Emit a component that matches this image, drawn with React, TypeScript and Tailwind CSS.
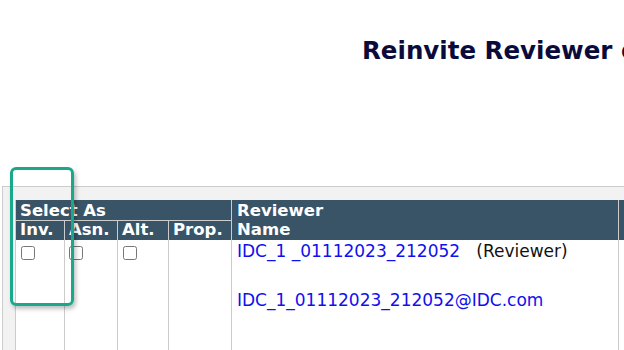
import React from "react";

export default function App() {
  const font = { fontFamily: '"DejaVu Sans", Verdana, sans-serif' };
  return (
    <div className="relative w-[624px] h-[350px] overflow-hidden bg-white" style={font}>
      <div className="h-[186px] pl-[362px] pt-[36px]">
        <h1 className="whitespace-nowrap text-[24.5px] font-bold leading-[30px] text-[#0b0b3b]">
          Reinvite Reviewer of
        </h1>
      </div>
      <div className="ml-[2px] w-[700px] border-l border-t border-[#cccccc] bg-[#f2f2f2] pl-[12px] pt-[13px] h-[200px]">
        <table className="border-collapse bg-white text-[16.5px]">
          <thead>
            <tr className="bg-[#3a5467] text-white font-bold leading-[19px]">
              <th colSpan={4} className="border-l border-[#cccccc] px-[4px] pt-[1px] text-left align-top h-[19px]">
                Select As
              </th>
              <th rowSpan={2} className="w-[387px] border-l border-[#cccccc] px-[5px] pt-[1px] text-left align-top">
                Reviewer
                <br />
                Name
              </th>
              <th rowSpan={2} className="w-[80px] border-l border-[#cccccc]"></th>
            </tr>
            <tr className="bg-[#3a5467] text-white font-bold leading-[18px]">
              <th className="w-[49px] border-l border-t border-[#cccccc] px-[4px] text-left font-bold h-[19px]">Inv.</th>
              <th className="w-[53px] border-l border-t border-[#cccccc] px-[4px] text-left font-bold">Asn.</th>
              <th className="w-[51px] border-l border-t border-[#cccccc] px-[4px] text-left font-bold">Alt.</th>
              <th className="w-[63px] border-l border-t border-[#cccccc] px-[4px] text-left font-bold">Prop.</th>
            </tr>
          </thead>
          <tbody>
            <tr className="h-[140px] align-top">
              <td className="border-l border-[#cccccc] pl-[5px] pt-[6px]">
                <input type="checkbox" className="m-0 block h-[14px] w-[14px]" />
              </td>
              <td className="border-l border-[#cccccc] pl-[4px] pt-[6px]">
                <input type="checkbox" className="m-0 block h-[14px] w-[14px]" />
              </td>
              <td className="border-l border-[#cccccc] pl-[5px] pt-[6px]">
                <input type="checkbox" className="m-0 block h-[14px] w-[14px]" />
              </td>
              <td className="border-l border-[#cccccc]"></td>
              <td className="border-l border-[#cccccc] pl-[5px] pt-[1px] text-[17px] leading-[20px] font-normal">
                <div className="whitespace-nowrap">
                  <span className="text-[#1010ee]">IDC_1 _01112023_212052</span>
                  <span className="text-[#111111]">&nbsp;&nbsp;&nbsp;(Reviewer)</span>
                </div>
                <div className="mt-[29px] whitespace-nowrap text-[#1010ee]">IDC_1_01112023_212052@IDC.com</div>
              </td>
              <td className="border-l border-[#cccccc]"></td>
            </tr>
          </tbody>
        </table>
      </div>
      <div className="absolute left-[10px] top-[167px] h-[139px] w-[64px] rounded-[6px] border-[3px] border-[#19a88a] shadow-[2px_3px_4px_rgba(0,0,0,0.25)]"></div>
    </div>
  );
}
